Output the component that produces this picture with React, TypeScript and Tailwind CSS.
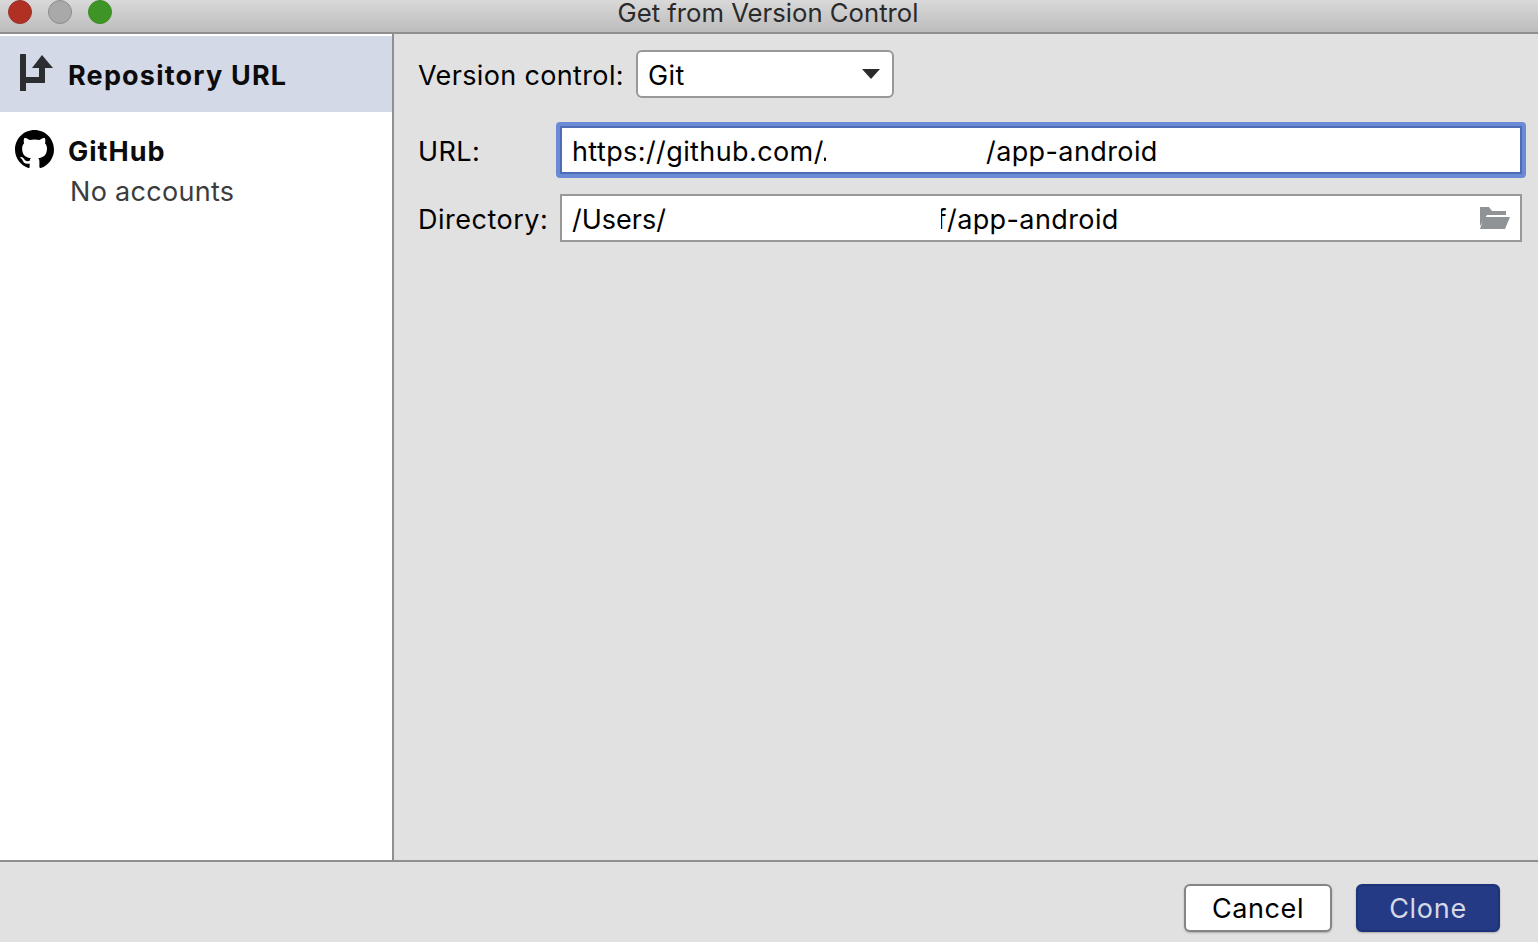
const font = { fontFamily: 'Inter, "Noto Sans", sans-serif' };

function RepoIcon() {
  return (
    <svg width="36" height="38" viewBox="0 0 36 38" className="mt-[18px] shrink-0 text-[#2b2d30]" fill="currentColor">
      <rect x="0" y="0" width="6" height="37" rx="0.5" />
      <rect x="6" y="23" width="19" height="6" />
      <rect x="19" y="13" width="6" height="11" />
      <path d="M22 1 33 14H12z" />
    </svg>
  );
}

function GithubIcon() {
  return (
    <svg width="39" height="39" viewBox="0 0 16 16" className="shrink-0 text-black" fill="currentColor">
      <path d="M8 0C3.58 0 0 3.58 0 8c0 3.54 2.29 6.53 5.47 7.59.4.07.55-.17.55-.38 0-.19-.01-.82-.01-1.49-2.01.37-2.53-.49-2.69-.94-.09-.23-.48-.94-.82-1.13-.28-.15-.68-.52-.01-.53.63-.01 1.08.58 1.23.82.72 1.21 1.87.87 2.33.66.07-.52.28-.87.51-1.07-1.78-.2-3.64-.89-3.64-3.95 0-.87.31-1.59.82-2.15-.08-.2-.36-1.02.08-2.12 0 0 .67-.21 2.2.82.64-.18 1.32-.27 2-.27.68 0 1.36.09 2 .27 1.53-1.04 2.2-.82 2.2-.82.44 1.1.16 1.92.08 2.12.51.56.82 1.27.82 2.15 0 3.07-1.87 3.75-3.65 3.95.29.25.54.73.54 1.48 0 1.07-.01 1.93-.01 2.2 0 .21.15.46.55.38A8.013 8.013 0 0016 8c0-4.42-3.58-8-8-8z" />
    </svg>
  );
}

function FolderIcon() {
  return (
    <svg width="30" height="22" viewBox="0 0 30 22" className="shrink-0 text-[#8f9396]" fill="currentColor">
      <path d="M0 0h9l3 4h14v4H7L0 19z" />
      <path d="M4 10h26l-5 12H0z" />
    </svg>
  );
}

export default function App() {
  return (
    <div className="flex h-[942px] w-[1538px] flex-col overflow-hidden bg-[#e1e1e1] text-[27px] tracking-[0.4px] text-black" style={font}>
      {/* title bar */}
      <div className="grid h-[34px] shrink-0 grid-cols-[1fr_auto_1fr] items-start border-b-2 border-[#8f8f8f] bg-gradient-to-b from-[#d9d9d9] to-[#bcbcbc]">
        <div className="flex gap-4 pl-2">
          <div className="h-6 w-6 rounded-full border border-[#98342a] bg-[#b03024]" />
          <div className="h-6 w-6 rounded-full border border-[#8d8d8d] bg-[#a9a9a9]" />
          <div className="h-6 w-6 rounded-full border border-[#3d8a28] bg-[#3e9425]" />
        </div>
        <div className="pr-[2px] text-[25.7px] leading-[26px] tracking-normal text-[#2a2a2a]">Get from Version Control</div>
        <div />
      </div>

      <div className="flex min-h-0 flex-1">
        {/* sidebar */}
        <div className="w-[394px] shrink-0 border-r-2 border-[#8f8f8f] bg-white pt-[2px]">
          <div className="flex h-[76px] items-start gap-[12px] bg-[#d3d9e7] pl-5">
            <RepoIcon />
            <span className="mt-[26px] font-bold leading-none tracking-[1.2px] text-[#0c0c0c]">Repository URL</span>
          </div>
          <div className="flex items-center gap-[14px] pl-[15px] pt-[18px]">
            <GithubIcon />
            <span className="pt-[3px] font-bold leading-none tracking-[1px] text-[#0c0c0c]">GitHub</span>
          </div>
          <div className="mt-[7px] pl-[70px] leading-[32px] tracking-[0.3px] text-[#3c3c3c]">No accounts</div>
        </div>

        {/* form */}
        <div className="flex-1 pl-[24px] pr-3 pt-4">
          <div className="flex h-12 items-center">
            <span className="w-[218px] shrink-0 pt-1 tracking-[0.35px]">Version control:</span>
            <div className="flex h-12 w-[258px] items-center justify-between rounded-md border-2 border-[#989898] bg-white pl-[10px] pr-[12px]">
              <span className="pt-1">Git</span>
              <svg width="18" height="10" viewBox="0 0 18 10" className="text-[#2b2b2b]" fill="currentColor">
                <path d="M0 0h18L9 10z" />
              </svg>
            </div>
          </div>

          <div className="mt-6 flex h-[56px] items-center">
            <span className="w-[138px] shrink-0 pt-1">URL:</span>
            <div className="flex h-[56px] w-[970px] items-center rounded border-[4px] border-[#6b8ad6] bg-white">
              <div className="flex h-full w-full items-center border-2 border-[#4e6bb5] pl-[10px] pt-1">
                <span className="flex w-[414px] shrink-0">
                  <span className="whitespace-pre">https://github.com/</span>
                  <span className="w-[2px] overflow-hidden">
                    <span className="-ml-[3px] block">.</span>
                  </span>
                </span>
                <span>/app-android</span>
              </div>
            </div>
          </div>

          <div className="mt-4 flex h-12 items-center">
            <span className="w-[142px] shrink-0 pt-1 tracking-[0.5px]">Directory:</span>
            <div className="flex h-12 w-[962px] items-center justify-between border-2 border-[#989898] bg-white pl-[10px] pr-[10px]">
              <div className="flex items-center pt-1">
                <span className="w-[369px] shrink-0 tracking-normal">/Users/</span>
                <span className="flex w-[6px] justify-end overflow-hidden">
                  <span className="shrink-0">f</span>
                </span>
                <span>/app-android</span>
              </div>
              <FolderIcon />
            </div>
          </div>
        </div>
      </div>

      {/* footer */}
      <div className="flex h-[82px] shrink-0 items-start justify-end gap-6 border-t-2 border-[#8f8f8f] pr-[38px] pt-[22px]">
        <button type="button" className="h-12 w-[148px] rounded-md border-2 border-[#858585] bg-white pt-[2px] tracking-[0.6px] shadow-[0_1px_2px_rgba(0,0,0,0.25)]">
          Cancel
        </button>
        <button type="button" className="h-12 w-[144px] rounded-md border-2 border-[#1e3278] bg-[#243a85] pt-[2px] tracking-[0.7px] text-[#d5d9e5] shadow-[0_1px_2px_rgba(0,0,0,0.25)]">
          Clone
        </button>
      </div>
    </div>
  );
}
